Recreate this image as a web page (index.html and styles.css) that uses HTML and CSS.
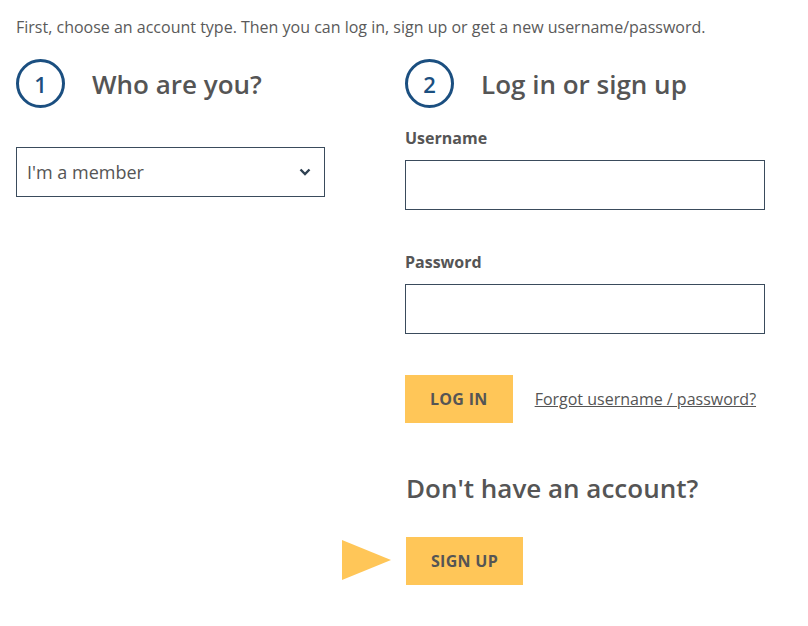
FILE: index.html
```html
<!DOCTYPE html>
<html lang="en">
<head>
    <meta charset="UTF-8">
    <meta name="viewport" content="width=device-width, initial-scale=1.0">
    <title>Log in</title>
    <link rel="stylesheet" href="styles.css">
</head>
<body>

<div class="page">
    <p class="intro">First, choose an account type. Then you can log in, sign up or get a new username/password.</p>

    <div class="steps">
        <div class="step">
            <div class="step-head">
                <span class="step-num">1</span>
                <h2>Who are you?</h2>
            </div>
            <div class="select">
                <span>I'm a member</span>
                <svg width="12" height="8" viewBox="0 0 12 8"><path d="M1.5 1.5 L6 6 L10.5 1.5" fill="none" stroke="#2f4152" stroke-width="2.4"/></svg>
            </div>
        </div>

        <div class="step">
            <div class="step-head">
                <span class="step-num">2</span>
                <h2>Log in or sign up</h2>
            </div>
            <label class="field-label" for="username">Username</label>
            <input type="text" id="username" class="field">
            <label class="field-label" for="password">Password</label>
            <input type="password" id="password" class="field">

            <div class="actions">
                <button class="btn">Log in</button>
                <a href="#" class="forgot">Forgot username / password?</a>
            </div>

            <h2 class="no-account">Don't have an account?</h2>
            <div class="signup">
                <span class="pointer"></span>
                <button class="btn">Sign up</button>
            </div>
        </div>
    </div>
</div>

</body>
</html>
```

FILE: styles.css
```css
body {
    margin: 0;
    font-family: "Open Sans", Arial, sans-serif;
    color: #555;
    background: #fff;
}
.page {
    padding: 0 16px;
}
.intro {
    margin: 0;
    padding-top: 16px;
    font-size: 16px;
    line-height: 22px;
    color: #5a5a5a;
}
.steps {
    display: grid;
    grid-template-columns: 309px 360px;
    column-gap: 80px;
    margin-top: 21px;
}
.step-head {
    display: flex;
    align-items: center;
    height: 49px;
}
.step-num {
    box-sizing: border-box;
    width: 49px;
    height: 49px;
    border: 3px solid #1b4f80;
    border-radius: 50%;
    display: flex;
    justify-content: center;
    align-items: center;
    color: #1b4f80;
    font-size: 22px;
    font-weight: 600;
}
h2 {
    margin: 0 0 0 27px;
    font-size: 26px;
    font-weight: 600;
    color: #555;
}
.select {
    box-sizing: border-box;
    margin-top: 39px;
    height: 50px;
    border: 1px solid #3a4b5c;
    display: flex;
    justify-content: space-between;
    align-items: center;
    padding: 0 13px 0 10px;
    font-size: 18px;
    color: #555;
}
.field-label {
    display: block;
    margin-top: 19px;
    font-size: 16px;
    font-weight: 700;
    line-height: 22px;
    color: #555;
}
.field {
    display: block;
    box-sizing: border-box;
    width: 360px;
    height: 50px;
    margin-top: 11px;
    margin-bottom: 41px;
    border: 1px solid #3a4b5c;
    border-radius: 0;
    font-family: inherit;
    font-size: 16px;
    padding: 0 10px;
}
.actions {
    display: flex;
    align-items: center;
    gap: 22px;
}
.btn {
    height: 48px;
    padding: 0 25px;
    border: none;
    background: #ffc658;
    color: #555;
    font-family: inherit;
    font-size: 16px;
    font-weight: 700;
    letter-spacing: 0.3px;
    text-transform: uppercase;
    cursor: pointer;
}
.forgot {
    font-size: 16px;
    color: #555;
    text-decoration: underline;
}
.no-account {
    margin: 47px 0 0 1px;
    line-height: 36px;
}
.signup {
    position: relative;
    margin-top: 31px;
    margin-left: 1px;
}
.pointer {
    position: absolute;
    left: -64px;
    top: 3px;
    width: 0;
    height: 0;
    border-top: 20px solid transparent;
    border-bottom: 20px solid transparent;
    border-left: 49px solid #ffc658;
}
```
